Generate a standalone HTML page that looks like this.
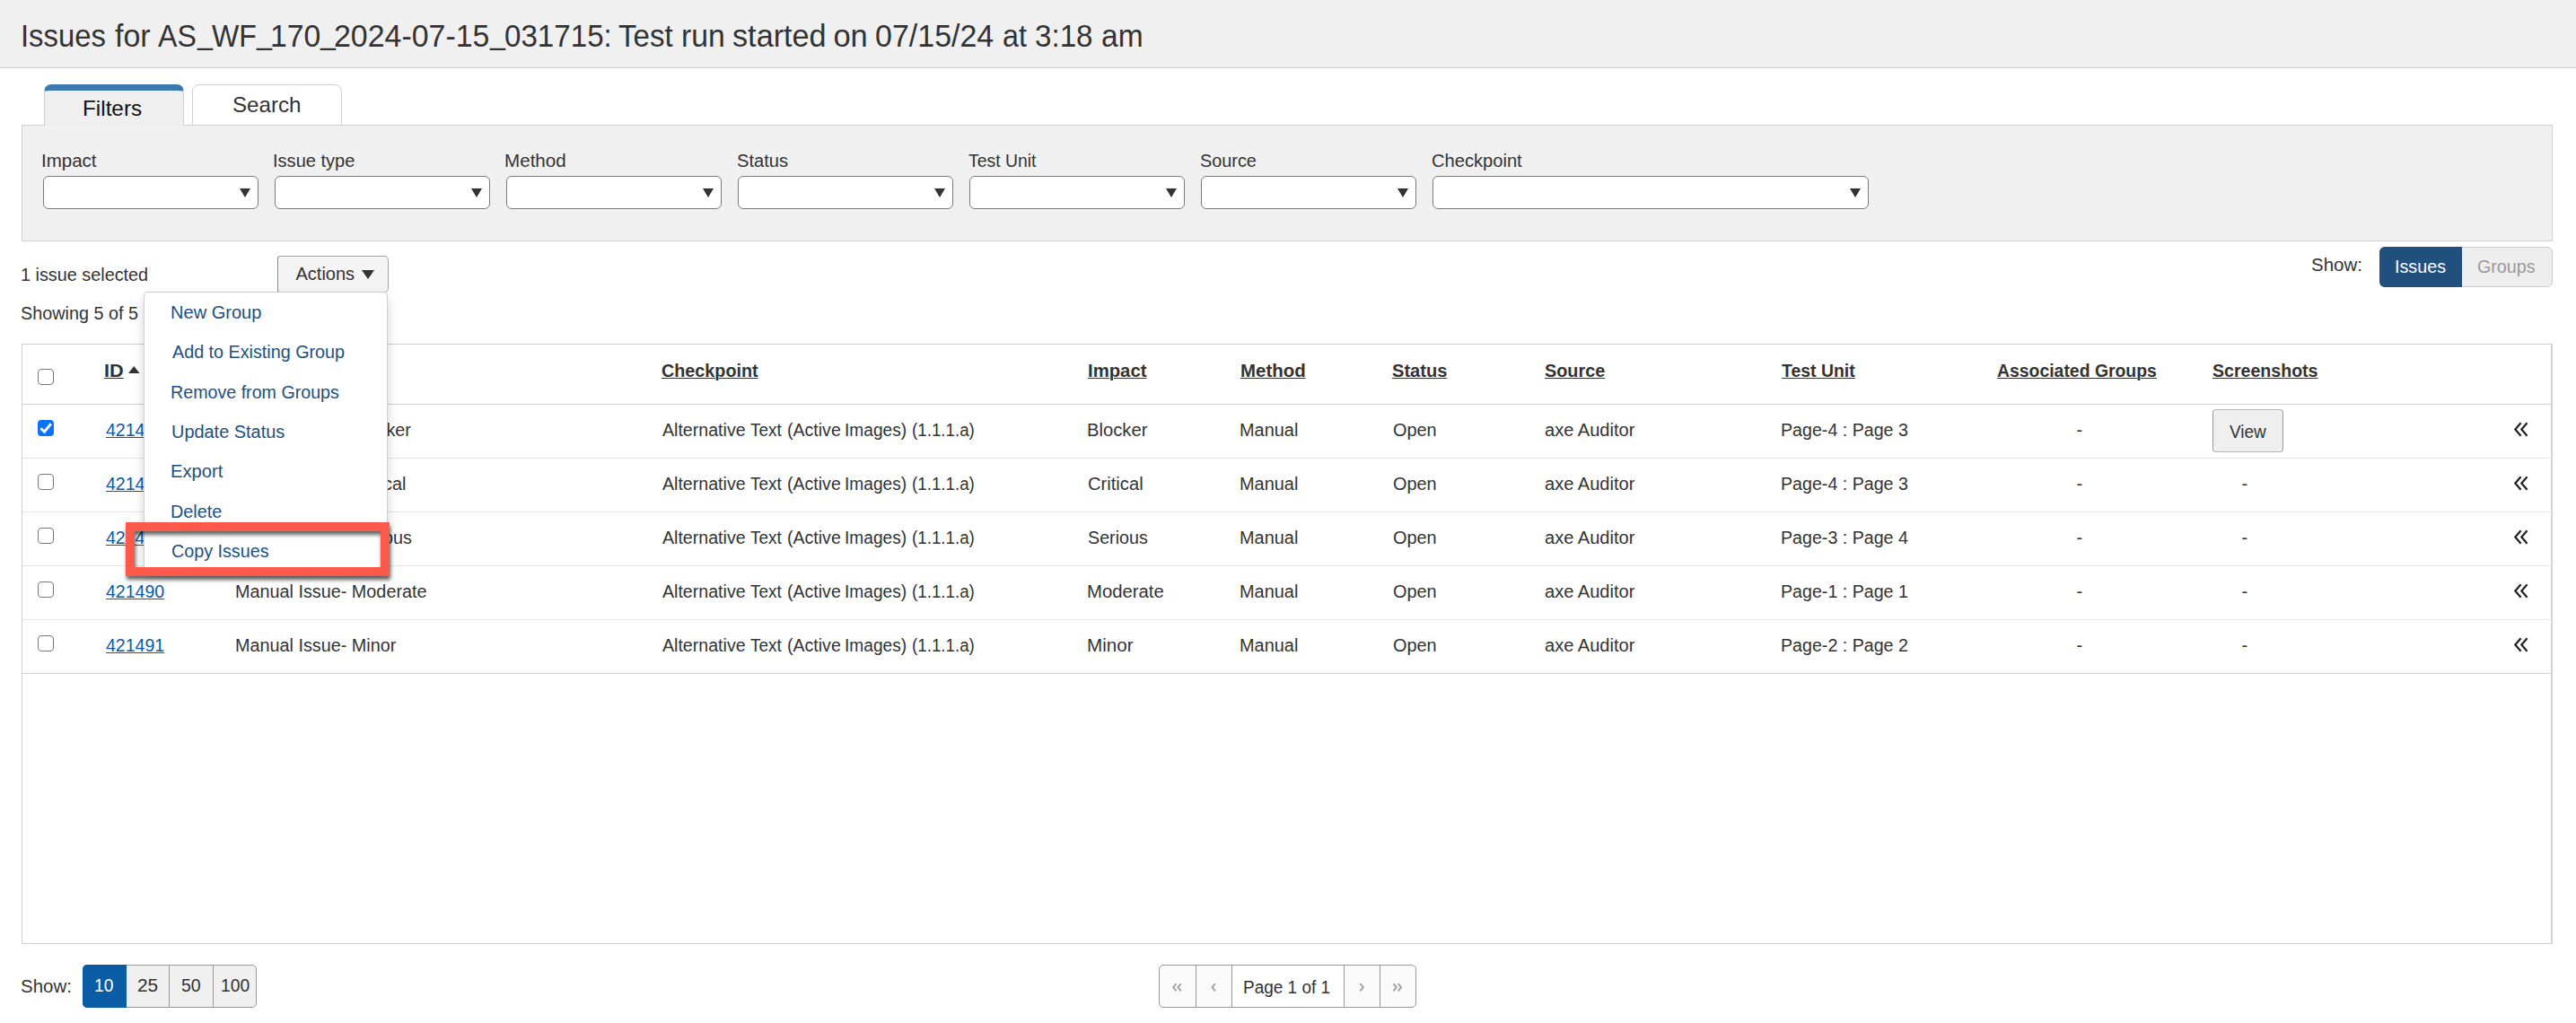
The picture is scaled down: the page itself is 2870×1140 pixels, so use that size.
<!DOCTYPE html><html><head><meta charset="utf-8"><style>
html,body{margin:0;padding:0;background:#fff;width:2870px;height:1140px;overflow:hidden;position:relative;}
body{font-family:"Liberation Sans",sans-serif;}
.t{position:absolute;white-space:nowrap;}
.r{position:absolute;box-sizing:border-box;}
.u{text-decoration:underline;text-decoration-thickness:1px;text-underline-offset:2px;}
</style></head><body>
<div class="r" style="left:0px;top:0px;width:2870.00px;height:76.00px;background:#f0f0f0;border-bottom:1px solid #cfcfcf;"></div>
<div class="t" style="left:22.75px;top:23.30px;font-size:34.5px;line-height:34.5px;color:#333;font-weight:normal;transform:scaleX(0.9510);transform-origin:0 0;">Issues</div>
<div class="t" style="left:127.50px;top:23.30px;font-size:34.5px;line-height:34.5px;color:#333;font-weight:normal;transform:scaleX(0.9850);transform-origin:0 0;">for</div>
<div class="t" style="left:176.25px;top:23.30px;font-size:34.5px;line-height:34.5px;color:#333;font-weight:normal;transform:scaleX(0.9300);transform-origin:0 0;">AS</div>
<div class="t" style="left:219.63px;top:20.30px;font-size:34.5px;line-height:34.5px;color:#333;font-weight:normal;transform:scaleX(0.8800);transform-origin:0 0;">_</div>
<div class="t" style="left:236.00px;top:23.30px;font-size:34.5px;line-height:34.5px;color:#333;font-weight:normal;transform:scaleX(0.9308);transform-origin:0 0;">WF</div>
<div class="t" style="left:285.88px;top:20.30px;font-size:34.5px;line-height:34.5px;color:#333;font-weight:normal;transform:scaleX(0.8800);transform-origin:0 0;">_</div>
<div class="t" style="left:300.82px;top:23.30px;font-size:34.5px;line-height:34.5px;color:#333;font-weight:normal;transform:scaleX(0.9783);transform-origin:0 0;">170</div>
<div class="t" style="left:357.13px;top:20.30px;font-size:34.5px;line-height:34.5px;color:#333;font-weight:normal;transform:scaleX(0.8800);transform-origin:0 0;">_</div>
<div class="t" style="left:371.78px;top:23.30px;font-size:34.5px;line-height:34.5px;color:#333;font-weight:normal;transform:scaleX(0.9827);transform-origin:0 0;">2024-07-15</div>
<div class="t" style="left:546.48px;top:20.30px;font-size:34.5px;line-height:34.5px;color:#333;font-weight:normal;transform:scaleX(0.8800);transform-origin:0 0;">_</div>
<div class="t" style="left:561.54px;top:23.30px;font-size:34.5px;line-height:34.5px;color:#333;font-weight:normal;transform:scaleX(0.9607);transform-origin:0 0;">031715:</div>
<div class="t" style="left:689.04px;top:23.30px;font-size:34.5px;line-height:34.5px;color:#333;font-weight:normal;transform:scaleX(0.9581);transform-origin:0 0;">Test</div>
<div class="t" style="left:758.64px;top:23.30px;font-size:34.5px;line-height:34.5px;color:#333;font-weight:normal;transform:scaleX(0.9783);transform-origin:0 0;">run</div>
<div class="t" style="left:815.91px;top:23.30px;font-size:34.5px;line-height:34.5px;color:#333;font-weight:normal;transform:scaleX(0.9922);transform-origin:0 0;">started</div>
<div class="t" style="left:928.40px;top:23.30px;font-size:34.5px;line-height:34.5px;color:#333;font-weight:normal;">on</div>
<div class="t" style="left:975.02px;top:23.30px;font-size:34.5px;line-height:34.5px;color:#333;font-weight:normal;transform:scaleX(0.9848);transform-origin:0 0;">07/15/24</div>
<div class="t" style="left:1116.56px;top:23.30px;font-size:34.5px;line-height:34.5px;color:#333;font-weight:normal;transform:scaleX(0.9375);transform-origin:0 0;">at</div>
<div class="t" style="left:1153.44px;top:23.30px;font-size:34.5px;line-height:34.5px;color:#333;font-weight:normal;transform:scaleX(0.9615);transform-origin:0 0;">3:18</div>
<div class="t" style="left:1226.78px;top:23.30px;font-size:34.5px;line-height:34.5px;color:#333;font-weight:normal;transform:scaleX(0.9722);transform-origin:0 0;">am</div>
<div class="r" style="left:48.5px;top:94px;width:156.00px;height:46.00px;background:#efefef;border:1px solid #cfcfcf;border-bottom:none;border-top:7px solid #3b7ab0;border-radius:8px 8px 0 0;z-index:2;"></div>
<div class="t" style="left:92.48px;top:108.68px;font-size:24px;line-height:24px;color:#111;font-weight:normal;transform:scaleX(1.0119);transform-origin:0 0;z-index:3;">Filters</div>
<div class="r" style="left:214px;top:94px;width:167.00px;height:46.00px;background:#fff;border:1px solid #cfcfcf;border-radius:8px 8px 0 0;"></div>
<div class="t" style="left:258.99px;top:104.93px;font-size:24px;line-height:24px;color:#333;font-weight:normal;transform:scaleX(1.0068);transform-origin:0 0;">Search</div>
<div class="r" style="left:24px;top:139px;width:2820.00px;height:130.00px;background:#f0f0f0;border:1px solid #cfcfcf;z-index:1;"></div>
<div class="t" style="left:45.95px;top:169.07px;font-size:20px;line-height:20px;color:#333;font-weight:normal;transform:scaleX(1.0259);transform-origin:0 0;z-index:2;">Impact</div>
<div class="r" style="left:48px;top:195.5px;width:240.00px;height:37.00px;background:#fff;border:1px solid #7a7a7a;border-radius:6px;z-index:2;"></div>
<svg class="r" style="left:267px;top:209.75px;width:12px;height:10px;z-index:3" viewBox="0 0 12 10"><path d="M0 0H12L6 10Z" fill="#333"/></svg>
<div class="t" style="left:304.24px;top:169.07px;font-size:20px;line-height:20px;color:#333;font-weight:normal;transform:scaleX(1.0028);transform-origin:0 0;z-index:2;">Issue type</div>
<div class="r" style="left:306px;top:195.5px;width:240.00px;height:37.00px;background:#fff;border:1px solid #7a7a7a;border-radius:6px;z-index:2;"></div>
<svg class="r" style="left:525px;top:209.75px;width:12px;height:10px;z-index:3" viewBox="0 0 12 10"><path d="M0 0H12L6 10Z" fill="#333"/></svg>
<div class="t" style="left:562.19px;top:169.07px;font-size:20px;line-height:20px;color:#333;font-weight:normal;transform:scaleX(1.0305);transform-origin:0 0;z-index:2;">Method</div>
<div class="r" style="left:564px;top:195.5px;width:240.00px;height:37.00px;background:#fff;border:1px solid #7a7a7a;border-radius:6px;z-index:2;"></div>
<svg class="r" style="left:783px;top:209.75px;width:12px;height:10px;z-index:3" viewBox="0 0 12 10"><path d="M0 0H12L6 10Z" fill="#333"/></svg>
<div class="t" style="left:820.69px;top:169.07px;font-size:20px;line-height:20px;color:#333;font-weight:normal;transform:scaleX(1.0055);transform-origin:0 0;z-index:2;">Status</div>
<div class="r" style="left:822px;top:195.5px;width:240.00px;height:37.00px;background:#fff;border:1px solid #7a7a7a;border-radius:6px;z-index:2;"></div>
<svg class="r" style="left:1041px;top:209.75px;width:12px;height:10px;z-index:3" viewBox="0 0 12 10"><path d="M0 0H12L6 10Z" fill="#333"/></svg>
<div class="t" style="left:1079.40px;top:169.07px;font-size:20px;line-height:20px;color:#333;font-weight:normal;transform:scaleX(0.9692);transform-origin:0 0;z-index:2;">Test Unit</div>
<div class="r" style="left:1080px;top:195.5px;width:240.00px;height:37.00px;background:#fff;border:1px solid #7a7a7a;border-radius:6px;z-index:2;"></div>
<svg class="r" style="left:1299px;top:209.75px;width:12px;height:10px;z-index:3" viewBox="0 0 12 10"><path d="M0 0H12L6 10Z" fill="#333"/></svg>
<div class="t" style="left:1336.51px;top:169.07px;font-size:20px;line-height:20px;color:#333;font-weight:normal;transform:scaleX(0.9919);transform-origin:0 0;z-index:2;">Source</div>
<div class="r" style="left:1338px;top:195.5px;width:240.00px;height:37.00px;background:#fff;border:1px solid #7a7a7a;border-radius:6px;z-index:2;"></div>
<svg class="r" style="left:1557px;top:209.75px;width:12px;height:10px;z-index:3" viewBox="0 0 12 10"><path d="M0 0H12L6 10Z" fill="#333"/></svg>
<div class="t" style="left:1594.69px;top:169.07px;font-size:20px;line-height:20px;color:#333;font-weight:normal;transform:scaleX(1.0061);transform-origin:0 0;z-index:2;">Checkpoint</div>
<div class="r" style="left:1596px;top:195.5px;width:486.00px;height:37.00px;background:#fff;border:1px solid #7a7a7a;border-radius:6px;z-index:2;"></div>
<svg class="r" style="left:2061px;top:209.75px;width:12px;height:10px;z-index:3" viewBox="0 0 12 10"><path d="M0 0H12L6 10Z" fill="#333"/></svg>
<div class="t" style="left:23.01px;top:295.57px;font-size:20px;line-height:20px;color:#333;font-weight:normal;transform:scaleX(0.9911);transform-origin:0 0;">1 issue selected</div>
<div class="r" style="left:309px;top:285px;width:124.00px;height:40.50px;background:#f4f4f4;border:1px solid #a5a5a5;border-left-color:#8a8a8a;border-radius:3px 5px 5px 3px;"></div>
<div class="t" style="left:329.50px;top:294.82px;font-size:20px;line-height:20px;color:#333;font-weight:normal;">Actions</div>
<svg class="r" style="left:403px;top:300.75px;width:14px;height:10px" viewBox="0 0 14 10"><path d="M0 0H14L7 10Z" fill="#333"/></svg>
<div class="t" style="left:23.01px;top:339.07px;font-size:20px;line-height:20px;color:#333;font-weight:normal;transform:scaleX(0.9905);transform-origin:0 0;">Showing 5 of 5</div>
<div class="t" style="left:2574.98px;top:285.07px;font-size:20px;line-height:20px;color:#333;font-weight:normal;transform:scaleX(1.0236);transform-origin:0 0;">Show:</div>
<div class="r" style="left:2651px;top:274.5px;width:193.00px;height:45.50px;background:#eee;border:1px solid #ccc;border-radius:6px;"></div>
<div class="r" style="left:2651px;top:274.5px;width:92.00px;height:45.50px;background:#21507f;border-radius:6px 0 0 6px;"></div>
<div class="t" style="left:2667.78px;top:287.07px;font-size:20px;line-height:20px;color:#fff;font-weight:normal;transform:scaleX(0.9864);transform-origin:0 0;">Issues</div>
<div class="t" style="left:2760.02px;top:287.07px;font-size:20px;line-height:20px;color:#999;font-weight:normal;transform:scaleX(0.9844);transform-origin:0 0;">Groups</div>
<div class="r" style="left:24px;top:383px;width:2820.00px;height:669.00px;border:1px solid #cfcfcf;border-right:2px solid #d3d3d3;"></div>
<div class="r" style="left:25px;top:450px;width:2818.00px;height:1.00px;background:#cfcfcf;"></div>
<div class="r" style="left:25px;top:510px;width:2818.00px;height:1.00px;background:#e5e5e5;"></div>
<div class="r" style="left:25px;top:570px;width:2818.00px;height:1.00px;background:#e5e5e5;"></div>
<div class="r" style="left:25px;top:630px;width:2818.00px;height:1.00px;background:#e5e5e5;"></div>
<div class="r" style="left:25px;top:690px;width:2818.00px;height:1.00px;background:#e5e5e5;"></div>
<div class="r" style="left:25px;top:750px;width:2818.00px;height:1.00px;background:#cfcfcf;"></div>
<div class="t" style="left:116.42px;top:403.07px;font-size:20px;line-height:20px;color:#333;font-weight:bold;transform:scaleX(1.0833);transform-origin:0 0;text-decoration:underline;text-decoration-thickness:1px;text-underline-offset:0.5px;">ID</div>
<div class="t" style="left:264.25px;top:403.07px;font-size:20px;line-height:20px;color:#333;font-weight:bold;transform:scaleX(0.9800);transform-origin:0 0;text-decoration:underline;text-decoration-thickness:1px;text-underline-offset:0.5px;">Title</div>
<div class="t" style="left:737.26px;top:403.07px;font-size:20px;line-height:20px;color:#333;font-weight:bold;transform:scaleX(0.9884);transform-origin:0 0;text-decoration:underline;text-decoration-thickness:1px;text-underline-offset:0.5px;">Checkpoint</div>
<div class="t" style="left:1211.98px;top:403.07px;font-size:20px;line-height:20px;color:#333;font-weight:bold;transform:scaleX(1.0159);transform-origin:0 0;text-decoration:underline;text-decoration-thickness:1px;text-underline-offset:0.5px;">Impact</div>
<div class="t" style="left:1381.73px;top:403.07px;font-size:20px;line-height:20px;color:#333;font-weight:bold;transform:scaleX(1.0217);transform-origin:0 0;text-decoration:underline;text-decoration-thickness:1px;text-underline-offset:0.5px;">Method</div>
<div class="t" style="left:1551.25px;top:403.07px;font-size:20px;line-height:20px;color:#333;font-weight:bold;transform:scaleX(1.0042);transform-origin:0 0;text-decoration:underline;text-decoration-thickness:1px;text-underline-offset:0.5px;">Status</div>
<div class="t" style="left:1720.76px;top:403.07px;font-size:20px;line-height:20px;color:#333;font-weight:bold;transform:scaleX(0.9924);transform-origin:0 0;text-decoration:underline;text-decoration-thickness:1px;text-underline-offset:0.5px;">Source</div>
<div class="t" style="left:1985.25px;top:403.07px;font-size:20px;line-height:20px;color:#333;font-weight:bold;transform:scaleX(0.9720);transform-origin:0 0;text-decoration:underline;text-decoration-thickness:1px;text-underline-offset:0.5px;">Test Unit</div>
<div class="t" style="left:2224.53px;top:403.07px;font-size:20px;line-height:20px;color:#333;font-weight:bold;transform:scaleX(0.9698);transform-origin:0 0;text-decoration:underline;text-decoration-thickness:1px;text-underline-offset:0.5px;">Associated Groups</div>
<div class="t" style="left:2464.52px;top:403.07px;font-size:20px;line-height:20px;color:#333;font-weight:bold;transform:scaleX(0.9788);transform-origin:0 0;text-decoration:underline;text-decoration-thickness:1px;text-underline-offset:0.5px;">Screenshots</div>
<svg class="r" style="left:143.25px;top:408.25px;width:12.5px;height:8px" viewBox="0 0 12.5 8"><path d="M0 8H12.5L6.25 0Z" fill="#333"/></svg>
<div class="r" style="left:42px;top:411px;width:18.00px;height:18.00px;background:#fff;border:1.5px solid #767676;border-radius:4px;"></div>
<div class="r" style="left:42px;top:468px;width:18.00px;height:18.00px;background:#0b72fa;border-radius:4px;"></div>
<svg class="r" style="left:42px;top:468px;width:18px;height:18px" viewBox="0 0 18 18"><path d="M3.3 9.3L7.4 13.2L14.8 4.3" stroke="#fff" stroke-width="2.9" fill="none"/></svg>
<div class="t" style="left:117.50px;top:469.07px;font-size:20px;line-height:20px;color:#0c5ba6;font-weight:normal;transform:scaleX(0.9773);transform-origin:0 0;text-decoration:underline;text-decoration-thickness:1px;text-underline-offset:1px;">421487</div>
<div class="t" style="left:262.27px;top:469.07px;font-size:20px;line-height:20px;color:#333;font-weight:normal;transform:scaleX(0.9900);transform-origin:0 0;">Manual Issue- Blocker</div>
<div class="t" style="left:737.90px;top:469.07px;font-size:20px;line-height:20px;color:#333;font-weight:normal;transform:scaleX(0.9798);transform-origin:0 0;">Alternative</div>
<div class="t" style="left:836.00px;top:469.07px;font-size:20px;line-height:20px;color:#333;font-weight:normal;transform:scaleX(0.9459);transform-origin:0 0;">Text</div>
<div class="t" style="left:876.72px;top:469.07px;font-size:20px;line-height:20px;color:#333;font-weight:normal;transform:scaleX(0.9780);transform-origin:0 0;">(Active</div>
<div class="t" style="left:941.29px;top:469.07px;font-size:20px;line-height:20px;color:#333;font-weight:normal;transform:scaleX(0.9565);transform-origin:0 0;">Images)</div>
<div class="t" style="left:1015.76px;top:469.07px;font-size:20px;line-height:20px;color:#333;font-weight:normal;transform:scaleX(0.9375);transform-origin:0 0;">(1.1.1.a)</div>
<div class="t" style="left:1210.98px;top:469.07px;font-size:20px;line-height:20px;color:#333;font-weight:normal;transform:scaleX(1.0115);transform-origin:0 0;">Blocker</div>
<div class="t" style="left:1381.01px;top:469.07px;font-size:20px;line-height:20px;color:#333;font-weight:normal;transform:scaleX(0.9960);transform-origin:0 0;">Manual</div>
<div class="t" style="left:1551.51px;top:469.07px;font-size:20px;line-height:20px;color:#333;font-weight:normal;transform:scaleX(0.9947);transform-origin:0 0;">Open</div>
<div class="t" style="left:1721.00px;top:469.07px;font-size:20px;line-height:20px;color:#333;font-weight:normal;transform:scaleX(1.0025);transform-origin:0 0;">axe Auditor</div>
<div class="t" style="left:1983.64px;top:469.07px;font-size:20px;line-height:20px;color:#333;font-weight:normal;transform:scaleX(0.9817);transform-origin:0 0;">Page-4 : Page 3</div>
<div class="t" style="left:2313.50px;top:469.07px;font-size:20px;line-height:20px;color:#333;font-weight:normal;">-</div>
<div class="r" style="left:2465px;top:456px;width:79.00px;height:47.50px;background:#efefef;border:1px solid #999;border-top:1.5px solid #b5b5b5;border-bottom:1.5px solid #b5b5b5;border-radius:4px;"></div>
<div class="t" style="left:2484.00px;top:470.57px;font-size:20px;line-height:20px;color:#333;font-weight:normal;transform:scaleX(0.9477);transform-origin:0 0;">View</div>
<svg class="r" style="left:2800px;top:469.5px;width:18px;height:18px" viewBox="0 0 18 18"><path d="M8.6 1.2L2.3 8.5L8.6 15.8M15.6 1.2L9.3 8.5L15.6 15.8" stroke="#222" stroke-width="2.2" fill="none"/></svg>
<div class="r" style="left:42px;top:528px;width:18.00px;height:18.00px;background:#fff;border:1.5px solid #767676;border-radius:4px;"></div>
<div class="t" style="left:117.50px;top:529.07px;font-size:20px;line-height:20px;color:#0c5ba6;font-weight:normal;transform:scaleX(0.9773);transform-origin:0 0;text-decoration:underline;text-decoration-thickness:1px;text-underline-offset:1px;">421488</div>
<div class="t" style="left:262.27px;top:529.07px;font-size:20px;line-height:20px;color:#333;font-weight:normal;transform:scaleX(0.9900);transform-origin:0 0;">Manual Issue- Critical</div>
<div class="t" style="left:737.90px;top:529.07px;font-size:20px;line-height:20px;color:#333;font-weight:normal;transform:scaleX(0.9798);transform-origin:0 0;">Alternative</div>
<div class="t" style="left:836.00px;top:529.07px;font-size:20px;line-height:20px;color:#333;font-weight:normal;transform:scaleX(0.9459);transform-origin:0 0;">Text</div>
<div class="t" style="left:876.72px;top:529.07px;font-size:20px;line-height:20px;color:#333;font-weight:normal;transform:scaleX(0.9780);transform-origin:0 0;">(Active</div>
<div class="t" style="left:941.29px;top:529.07px;font-size:20px;line-height:20px;color:#333;font-weight:normal;transform:scaleX(0.9565);transform-origin:0 0;">Images)</div>
<div class="t" style="left:1015.76px;top:529.07px;font-size:20px;line-height:20px;color:#333;font-weight:normal;transform:scaleX(0.9375);transform-origin:0 0;">(1.1.1.a)</div>
<div class="t" style="left:1211.99px;top:529.07px;font-size:20px;line-height:20px;color:#333;font-weight:normal;transform:scaleX(1.0085);transform-origin:0 0;">Critical</div>
<div class="t" style="left:1381.01px;top:529.07px;font-size:20px;line-height:20px;color:#333;font-weight:normal;transform:scaleX(0.9960);transform-origin:0 0;">Manual</div>
<div class="t" style="left:1551.51px;top:529.07px;font-size:20px;line-height:20px;color:#333;font-weight:normal;transform:scaleX(0.9947);transform-origin:0 0;">Open</div>
<div class="t" style="left:1721.00px;top:529.07px;font-size:20px;line-height:20px;color:#333;font-weight:normal;transform:scaleX(1.0025);transform-origin:0 0;">axe Auditor</div>
<div class="t" style="left:1983.64px;top:529.07px;font-size:20px;line-height:20px;color:#333;font-weight:normal;transform:scaleX(0.9817);transform-origin:0 0;">Page-4 : Page 3</div>
<div class="t" style="left:2313.50px;top:529.07px;font-size:20px;line-height:20px;color:#333;font-weight:normal;">-</div>
<div class="t" style="left:2497.50px;top:529.07px;font-size:20px;line-height:20px;color:#333;font-weight:normal;">-</div>
<svg class="r" style="left:2800px;top:529.5px;width:18px;height:18px" viewBox="0 0 18 18"><path d="M8.6 1.2L2.3 8.5L8.6 15.8M15.6 1.2L9.3 8.5L15.6 15.8" stroke="#222" stroke-width="2.2" fill="none"/></svg>
<div class="r" style="left:42px;top:588px;width:18.00px;height:18.00px;background:#fff;border:1.5px solid #767676;border-radius:4px;"></div>
<div class="t" style="left:117.50px;top:589.07px;font-size:20px;line-height:20px;color:#0c5ba6;font-weight:normal;transform:scaleX(0.9773);transform-origin:0 0;text-decoration:underline;text-decoration-thickness:1px;text-underline-offset:1px;">421489</div>
<div class="t" style="left:262.27px;top:589.07px;font-size:20px;line-height:20px;color:#333;font-weight:normal;transform:scaleX(0.9900);transform-origin:0 0;">Manual Issue- Serious</div>
<div class="t" style="left:737.90px;top:589.07px;font-size:20px;line-height:20px;color:#333;font-weight:normal;transform:scaleX(0.9798);transform-origin:0 0;">Alternative</div>
<div class="t" style="left:836.00px;top:589.07px;font-size:20px;line-height:20px;color:#333;font-weight:normal;transform:scaleX(0.9459);transform-origin:0 0;">Text</div>
<div class="t" style="left:876.72px;top:589.07px;font-size:20px;line-height:20px;color:#333;font-weight:normal;transform:scaleX(0.9780);transform-origin:0 0;">(Active</div>
<div class="t" style="left:941.29px;top:589.07px;font-size:20px;line-height:20px;color:#333;font-weight:normal;transform:scaleX(0.9565);transform-origin:0 0;">Images)</div>
<div class="t" style="left:1015.76px;top:589.07px;font-size:20px;line-height:20px;color:#333;font-weight:normal;transform:scaleX(0.9375);transform-origin:0 0;">(1.1.1.a)</div>
<div class="t" style="left:1212.02px;top:589.07px;font-size:20px;line-height:20px;color:#333;font-weight:normal;transform:scaleX(0.9848);transform-origin:0 0;">Serious</div>
<div class="t" style="left:1381.01px;top:589.07px;font-size:20px;line-height:20px;color:#333;font-weight:normal;transform:scaleX(0.9960);transform-origin:0 0;">Manual</div>
<div class="t" style="left:1551.51px;top:589.07px;font-size:20px;line-height:20px;color:#333;font-weight:normal;transform:scaleX(0.9947);transform-origin:0 0;">Open</div>
<div class="t" style="left:1721.00px;top:589.07px;font-size:20px;line-height:20px;color:#333;font-weight:normal;transform:scaleX(1.0025);transform-origin:0 0;">axe Auditor</div>
<div class="t" style="left:1983.64px;top:589.07px;font-size:20px;line-height:20px;color:#333;font-weight:normal;transform:scaleX(0.9817);transform-origin:0 0;">Page-3 : Page 4</div>
<div class="t" style="left:2313.50px;top:589.07px;font-size:20px;line-height:20px;color:#333;font-weight:normal;">-</div>
<div class="t" style="left:2497.50px;top:589.07px;font-size:20px;line-height:20px;color:#333;font-weight:normal;">-</div>
<svg class="r" style="left:2800px;top:589.5px;width:18px;height:18px" viewBox="0 0 18 18"><path d="M8.6 1.2L2.3 8.5L8.6 15.8M15.6 1.2L9.3 8.5L15.6 15.8" stroke="#222" stroke-width="2.2" fill="none"/></svg>
<div class="r" style="left:42px;top:648px;width:18.00px;height:18.00px;background:#fff;border:1.5px solid #767676;border-radius:4px;"></div>
<div class="t" style="left:117.50px;top:649.07px;font-size:20px;line-height:20px;color:#0c5ba6;font-weight:normal;transform:scaleX(0.9773);transform-origin:0 0;text-decoration:underline;text-decoration-thickness:1px;text-underline-offset:1px;">421490</div>
<div class="t" style="left:262.27px;top:649.07px;font-size:20px;line-height:20px;color:#333;font-weight:normal;transform:scaleX(0.9900);transform-origin:0 0;">Manual Issue- Moderate</div>
<div class="t" style="left:737.90px;top:649.07px;font-size:20px;line-height:20px;color:#333;font-weight:normal;transform:scaleX(0.9798);transform-origin:0 0;">Alternative</div>
<div class="t" style="left:836.00px;top:649.07px;font-size:20px;line-height:20px;color:#333;font-weight:normal;transform:scaleX(0.9459);transform-origin:0 0;">Text</div>
<div class="t" style="left:876.72px;top:649.07px;font-size:20px;line-height:20px;color:#333;font-weight:normal;transform:scaleX(0.9780);transform-origin:0 0;">(Active</div>
<div class="t" style="left:941.29px;top:649.07px;font-size:20px;line-height:20px;color:#333;font-weight:normal;transform:scaleX(0.9565);transform-origin:0 0;">Images)</div>
<div class="t" style="left:1015.76px;top:649.07px;font-size:20px;line-height:20px;color:#333;font-weight:normal;transform:scaleX(0.9375);transform-origin:0 0;">(1.1.1.a)</div>
<div class="t" style="left:1210.97px;top:649.07px;font-size:20px;line-height:20px;color:#333;font-weight:normal;transform:scaleX(1.0152);transform-origin:0 0;">Moderate</div>
<div class="t" style="left:1381.01px;top:649.07px;font-size:20px;line-height:20px;color:#333;font-weight:normal;transform:scaleX(0.9960);transform-origin:0 0;">Manual</div>
<div class="t" style="left:1551.51px;top:649.07px;font-size:20px;line-height:20px;color:#333;font-weight:normal;transform:scaleX(0.9947);transform-origin:0 0;">Open</div>
<div class="t" style="left:1721.00px;top:649.07px;font-size:20px;line-height:20px;color:#333;font-weight:normal;transform:scaleX(1.0025);transform-origin:0 0;">axe Auditor</div>
<div class="t" style="left:1983.64px;top:649.07px;font-size:20px;line-height:20px;color:#333;font-weight:normal;transform:scaleX(0.9817);transform-origin:0 0;">Page-1 : Page 1</div>
<div class="t" style="left:2313.50px;top:649.07px;font-size:20px;line-height:20px;color:#333;font-weight:normal;">-</div>
<div class="t" style="left:2497.50px;top:649.07px;font-size:20px;line-height:20px;color:#333;font-weight:normal;">-</div>
<svg class="r" style="left:2800px;top:649.5px;width:18px;height:18px" viewBox="0 0 18 18"><path d="M8.6 1.2L2.3 8.5L8.6 15.8M15.6 1.2L9.3 8.5L15.6 15.8" stroke="#222" stroke-width="2.2" fill="none"/></svg>
<div class="r" style="left:42px;top:708px;width:18.00px;height:18.00px;background:#fff;border:1.5px solid #767676;border-radius:4px;"></div>
<div class="t" style="left:117.50px;top:709.07px;font-size:20px;line-height:20px;color:#0c5ba6;font-weight:normal;transform:scaleX(0.9773);transform-origin:0 0;text-decoration:underline;text-decoration-thickness:1px;text-underline-offset:1px;">421491</div>
<div class="t" style="left:262.27px;top:709.07px;font-size:20px;line-height:20px;color:#333;font-weight:normal;transform:scaleX(0.9900);transform-origin:0 0;">Manual Issue- Minor</div>
<div class="t" style="left:737.90px;top:709.07px;font-size:20px;line-height:20px;color:#333;font-weight:normal;transform:scaleX(0.9798);transform-origin:0 0;">Alternative</div>
<div class="t" style="left:836.00px;top:709.07px;font-size:20px;line-height:20px;color:#333;font-weight:normal;transform:scaleX(0.9459);transform-origin:0 0;">Text</div>
<div class="t" style="left:876.72px;top:709.07px;font-size:20px;line-height:20px;color:#333;font-weight:normal;transform:scaleX(0.9780);transform-origin:0 0;">(Active</div>
<div class="t" style="left:941.29px;top:709.07px;font-size:20px;line-height:20px;color:#333;font-weight:normal;transform:scaleX(0.9565);transform-origin:0 0;">Images)</div>
<div class="t" style="left:1015.76px;top:709.07px;font-size:20px;line-height:20px;color:#333;font-weight:normal;transform:scaleX(0.9375);transform-origin:0 0;">(1.1.1.a)</div>
<div class="t" style="left:1210.94px;top:709.07px;font-size:20px;line-height:20px;color:#333;font-weight:normal;transform:scaleX(1.0312);transform-origin:0 0;">Minor</div>
<div class="t" style="left:1381.01px;top:709.07px;font-size:20px;line-height:20px;color:#333;font-weight:normal;transform:scaleX(0.9960);transform-origin:0 0;">Manual</div>
<div class="t" style="left:1551.51px;top:709.07px;font-size:20px;line-height:20px;color:#333;font-weight:normal;transform:scaleX(0.9947);transform-origin:0 0;">Open</div>
<div class="t" style="left:1721.00px;top:709.07px;font-size:20px;line-height:20px;color:#333;font-weight:normal;transform:scaleX(1.0025);transform-origin:0 0;">axe Auditor</div>
<div class="t" style="left:1983.64px;top:709.07px;font-size:20px;line-height:20px;color:#333;font-weight:normal;transform:scaleX(0.9817);transform-origin:0 0;">Page-2 : Page 2</div>
<div class="t" style="left:2313.50px;top:709.07px;font-size:20px;line-height:20px;color:#333;font-weight:normal;">-</div>
<div class="t" style="left:2497.50px;top:709.07px;font-size:20px;line-height:20px;color:#333;font-weight:normal;">-</div>
<svg class="r" style="left:2800px;top:709.5px;width:18px;height:18px" viewBox="0 0 18 18"><path d="M8.6 1.2L2.3 8.5L8.6 15.8M15.6 1.2L9.3 8.5L15.6 15.8" stroke="#222" stroke-width="2.2" fill="none"/></svg>
<div class="r" style="left:160px;top:325px;width:271.50px;height:311.00px;background:#fff;border:1px solid #cdcdcd;border-radius:4px;box-shadow:0 6px 12px rgba(0,0,0,.175);z-index:5;"></div>
<div class="t" style="left:189.74px;top:338.07px;font-size:20px;line-height:20px;color:#21507f;font-weight:normal;transform:scaleX(1.0026);transform-origin:0 0;z-index:6;">New Group</div>
<div class="t" style="left:191.75px;top:382.37px;font-size:20px;line-height:20px;color:#21507f;font-weight:normal;transform:scaleX(0.9871);transform-origin:0 0;z-index:6;">Add to Existing Group</div>
<div class="t" style="left:189.78px;top:426.67px;font-size:20px;line-height:20px;color:#21507f;font-weight:normal;transform:scaleX(0.9828);transform-origin:0 0;z-index:6;">Remove from Groups</div>
<div class="t" style="left:190.75px;top:470.97px;font-size:20px;line-height:20px;color:#21507f;font-weight:normal;transform:scaleX(0.9960);transform-origin:0 0;z-index:6;">Update Status</div>
<div class="t" style="left:189.73px;top:515.27px;font-size:20px;line-height:20px;color:#21507f;font-weight:normal;transform:scaleX(1.0089);transform-origin:0 0;z-index:6;">Export</div>
<div class="t" style="left:189.77px;top:559.57px;font-size:20px;line-height:20px;color:#21507f;font-weight:normal;transform:scaleX(0.9909);transform-origin:0 0;z-index:6;">Delete</div>
<div class="t" style="left:190.76px;top:603.87px;font-size:20px;line-height:20px;color:#21507f;font-weight:normal;transform:scaleX(0.9861);transform-origin:0 0;z-index:6;">Copy Issues</div>
<div class="r" style="left:140px;top:582px;width:294.00px;height:60.00px;border:10px solid #fd594a;box-shadow:1px 4px 4px rgba(0,0,0,.6), inset 1px 4px 4px rgba(0,0,0,.6);z-index:7;"></div>
<div class="t" style="left:22.98px;top:1089.07px;font-size:20px;line-height:20px;color:#333;font-weight:normal;transform:scaleX(1.0236);transform-origin:0 0;">Show:</div>
<div class="r" style="left:91.5px;top:1075px;width:194.00px;height:47.50px;background:#f0f0f0;border:1px solid #999;border-radius:5px;"></div>
<div class="r" style="left:91.5px;top:1075px;width:49.00px;height:47.50px;background:#0a5ca5;border-radius:5px 0 0 5px;"></div>
<div class="r" style="left:188px;top:1075px;width:1.00px;height:47.50px;background:#999;"></div>
<div class="r" style="left:237px;top:1075px;width:1.00px;height:47.50px;background:#999;"></div>
<div class="t" style="left:105.04px;top:1088.07px;font-size:20px;line-height:20px;color:#fff;font-weight:normal;transform:scaleX(0.9571);transform-origin:0 0;">10</div>
<div class="t" style="left:152.86px;top:1088.07px;font-size:20px;line-height:20px;color:#333;font-weight:normal;transform:scaleX(1.0450);transform-origin:0 0;">25</div>
<div class="t" style="left:202.02px;top:1088.07px;font-size:20px;line-height:20px;color:#333;font-weight:normal;transform:scaleX(0.9762);transform-origin:0 0;">50</div>
<div class="t" style="left:245.54px;top:1088.07px;font-size:20px;line-height:20px;color:#333;font-weight:normal;transform:scaleX(0.9625);transform-origin:0 0;">100</div>
<div class="r" style="left:1291px;top:1075px;width:287.00px;height:47.50px;background:#fafafa;border:1px solid #999;border-radius:5px;"></div>
<div class="r" style="left:1372px;top:1076px;width:125.00px;height:45.50px;background:#fff;"></div>
<div class="r" style="left:1331.5px;top:1075px;width:1.00px;height:47.50px;background:#999;"></div>
<div class="r" style="left:1371.5px;top:1075px;width:1.00px;height:47.50px;background:#999;"></div>
<div class="r" style="left:1496.5px;top:1075px;width:1.00px;height:47.50px;background:#999;"></div>
<div class="r" style="left:1537px;top:1075px;width:1.00px;height:47.50px;background:#999;"></div>
<div class="t" style="left:1384.70px;top:1090.07px;font-size:20px;line-height:20px;color:#333;font-weight:normal;transform:scaleX(0.9490);transform-origin:0 0;">Page 1 of 1</div>
<svg class="r" style="left:1290px;top:1085px;width:280px;height:30px;z-index:3" viewBox="0 0 280 30"><path d="M20.6 11.1L17.2 15.25L20.6 19.4M25.8 11.1L22.4 15.25L25.8 19.4M63.9 11.1L60.5 15.25L63.9 19.4M225.4 11.1L228.8 15.25L225.4 19.4M262.4 11.1L265.8 15.25L262.4 19.4M267.7 11.1L271.1 15.25L267.7 19.4" stroke="#a0a0a0" stroke-width="1.9" fill="none"/></svg>
</body></html>
